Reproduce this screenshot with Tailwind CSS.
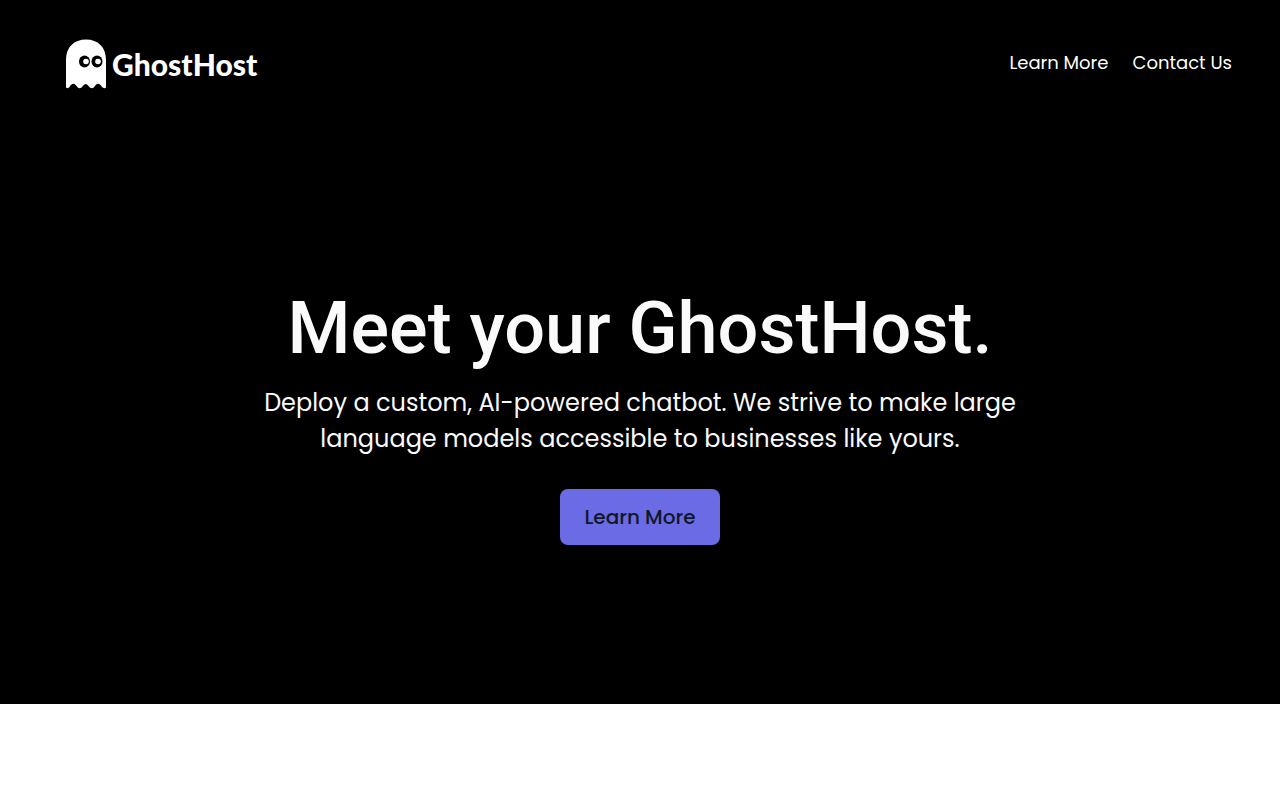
<!DOCTYPE html>
<html lang="en">
<head>
  <meta charset="UTF-8">
  <meta name="viewport" content="width=device-width, initial-scale=1.0">
  <title>GhostHost</title>
  <script src="https://cdn.jsdelivr.net/npm/@tailwindcss/browser@4"></script>
</head>
<body class="bg-white font-['Poppins','Inter',sans-serif]">
  <div class="min-h-[88vh] bg-black text-white flex flex-col">
    <header class="h-32 pl-16 pr-12 flex items-center justify-between">
      <a href="#" class="flex items-center gap-1">
        <svg class="w-11 h-13" viewBox="0 0 44 52" aria-hidden="true">
          <path fill="#fff" d="M2 49.500V22C2 9 10 1.500 22 1.500S42 9 42 22v27.500q-2 1.500-4-.5C35.500 45 33 45 31 48q-3.300 4.500-6.500 0q-2.800-4-5.600 0q-3.200 4.500-6.400 0C10 45 8 45 5.500 49q-1.500 2-3.500.5z"/>
          <ellipse cx="20.500" cy="23.500" rx="5.500" ry="6" fill="#000"/>
          <ellipse cx="33" cy="23.500" rx="5.500" ry="6" fill="#000"/>
          <circle cx="22" cy="23.500" r="2.800" fill="#fff"/>
          <circle cx="34" cy="23.500" r="2.800" fill="#fff"/>
        </svg>
        <span class="font-['Lato',sans-serif] font-black text-3xl">GhostHost</span>
      </a>
      <nav class="flex gap-6 pb-0.5 text-lg">
        <a href="#about">Learn More</a>
        <a href="#contact">Contact Us</a>
      </nav>
    </header>

    <main class="flex-1 flex flex-col items-center justify-center px-6 pt-1.5 text-center">
      <h1 class="font-['Roboto',sans-serif] font-medium text-7xl text-neutral-50">Meet your GhostHost.</h1>
      <p class="mt-5 max-w-3xl text-2xl leading-9 text-neutral-50">Deploy a custom, AI-powered chatbot. We strive to make large language models accessible to businesses like yours.</p>
      <button type="button" class="mt-8 h-14 px-6 rounded-lg bg-[#6b6be6] text-gray-900 text-xl font-medium">Learn More</button>
    </main>
  </div>
</body>
</html>
